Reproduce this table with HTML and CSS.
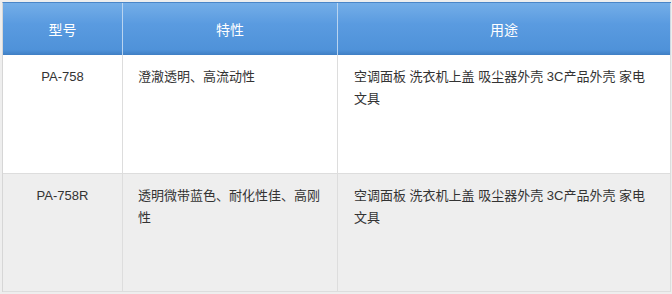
FILE: index.html
```html
<!DOCTYPE html>
<html lang="zh-CN">
<head>
<meta charset="utf-8">
<link rel="stylesheet" href="styles.css">
</head>
<body>
<table class="spec">
  <thead>
    <tr>
      <th class="c-model">型号</th>
      <th class="c-feat">特性</th>
      <th class="c-use">用途</th>
    </tr>
  </thead>
  <tbody>
    <tr class="r1">
      <td class="c-model">PA-758</td>
      <td class="c-feat">澄澈透明、高流动性</td>
      <td class="c-use">空调面板 洗衣机上盖 吸尘器外壳 3C产品外壳 家电文具</td>
    </tr>
    <tr class="r2">
      <td class="c-model">PA-758R</td>
      <td class="c-feat">透明微带蓝色、耐化性佳、高刚性</td>
      <td class="c-use">空调面板 洗衣机上盖 吸尘器外壳 3C产品外壳 家电文具</td>
    </tr>
  </tbody>
</table>
</body>
</html>
```
FILE: styles.css
```css
html, body {
  margin: 0;
  padding: 0;
  background: #eeeeee;
}
body {
  padding: 2px;
  font-family: "Liberation Sans", "Noto Sans CJK SC", sans-serif;
}
.spec {
  border-collapse: separate;
  border-spacing: 0;
  table-layout: fixed;
  width: 669px;
  border-left: 1px solid #d6d6d6;
  border-top: 1px solid #4a86c8;
}
.spec th, .spec td {
  box-sizing: border-box;
  border-right: 1px solid #dddddd;
  border-bottom: 1px solid #dddddd;
  vertical-align: top;
}
.spec .c-model { width: 120px; }
.spec .c-feat { width: 215px; }
.spec .c-use { width: 333px; }
.spec th {
  height: 52px;
  padding: 0;
  vertical-align: middle;
  font-weight: normal;
  font-size: 14px;
  color: #ffffff;
  text-align: center;
  background: linear-gradient(#74aee8 0%, #5a9be0 40%, #4f92d9 90%, #3f7fc4 100%);
  border-right: 1px solid #b9d4f0;
  border-bottom: none;
}
.spec th.c-use { border-right-color: #cfd8e2; }
.spec td {
  height: 118px;
  font-size: 13px;
  line-height: 22px;
  color: #333333;
  padding: 11px 15px 0 15px;
}
.spec td.c-model { text-align: center; }
.spec td.c-use { padding-left: 16px; }
.r1 td { background: #ffffff; height: 119px; }
.r2 td { background: #eeeeee; }
```
